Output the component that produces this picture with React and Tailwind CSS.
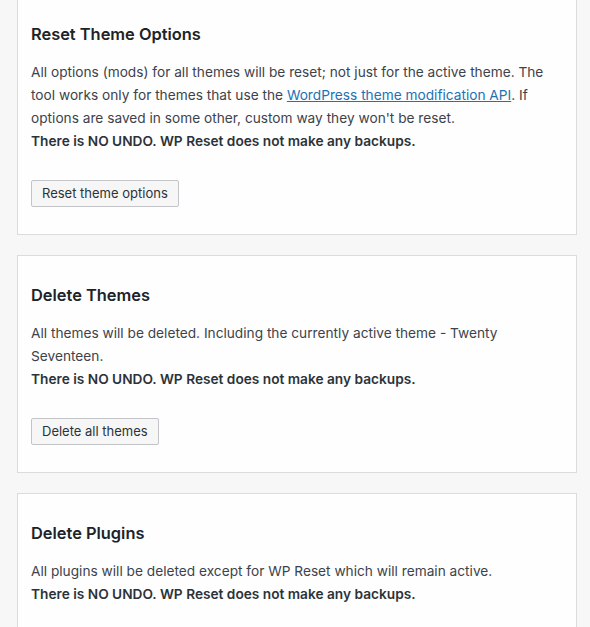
export default function App() {
  const warning = "There is NO UNDO. WP Reset does not make any backups.";

  return (
    <div className="min-h-screen bg-[#f7f7f8] font-['Inter','Liberation_Sans',sans-serif] text-[#3c434a] overflow-hidden">
      <div className="flex flex-col gap-5 pl-[17px] pr-[13px] -mt-1.5">
        {/* Reset theme options */}
        <div className="border border-[#dcdcde] bg-[#fefeff] px-[13px] pt-[27px] pb-[27px]">
          <h3 className="text-[16.4px] leading-6 font-semibold text-[#1d2327]">Reset Theme Options</h3>
          <p className="mt-[15px] text-[13.7px] leading-[23px]">
            All options (mods) for all themes will be reset; not just for the active theme. The tool works only
            for themes that use the{" "}
            <a href="#" className="text-[#2271b1] underline">
              WordPress theme modification API
            </a>
            . If options are saved in some other, custom way they won't be reset.
            <br />
            <b className="font-semibold text-[#2c3338]">{warning}</b>
          </p>
          <button className="mt-[27px] h-[27px] px-2.5 border border-[#c3c4c7] bg-[#f6f6f7] rounded-[2px] text-[13px] text-[#2c3338]">
            Reset theme options
          </button>
        </div>

        {/* Delete themes */}
        <div className="border border-[#dcdcde] bg-[#fefeff] px-[13px] pt-[27px] pb-[27px]">
          <h3 className="text-[16.4px] leading-6 font-semibold text-[#1d2327]">Delete Themes</h3>
          <p className="mt-[15px] text-[13.7px] leading-[23px]">
            All themes will be deleted. Including the currently active theme - Twenty Seventeen.
            <br />
            <b className="font-semibold text-[#2c3338]">{warning}</b>
          </p>
          <button className="mt-[27px] h-[27px] px-2.5 border border-[#c3c4c7] bg-[#f6f6f7] rounded-[2px] text-[13px] text-[#2c3338]">
            Delete all themes
          </button>
        </div>

        {/* Delete plugins */}
        <div className="border border-[#dcdcde] bg-[#fefeff] px-[13px] pt-[27px] pb-[27px]">
          <h3 className="text-[16.4px] leading-6 font-semibold text-[#1d2327]">Delete Plugins</h3>
          <p className="mt-[15px] text-[13.7px] leading-[23px]">
            All plugins will be deleted except for WP Reset which will remain active.
            <br />
            <b className="font-semibold text-[#2c3338]">{warning}</b>
          </p>
          <button className="mt-[27px] h-[27px] px-2.5 border border-[#c3c4c7] bg-[#f6f6f7] rounded-[2px] text-[13px] text-[#2c3338]">
            Delete all plugins
          </button>
        </div>
      </div>
    </div>
  );
}
